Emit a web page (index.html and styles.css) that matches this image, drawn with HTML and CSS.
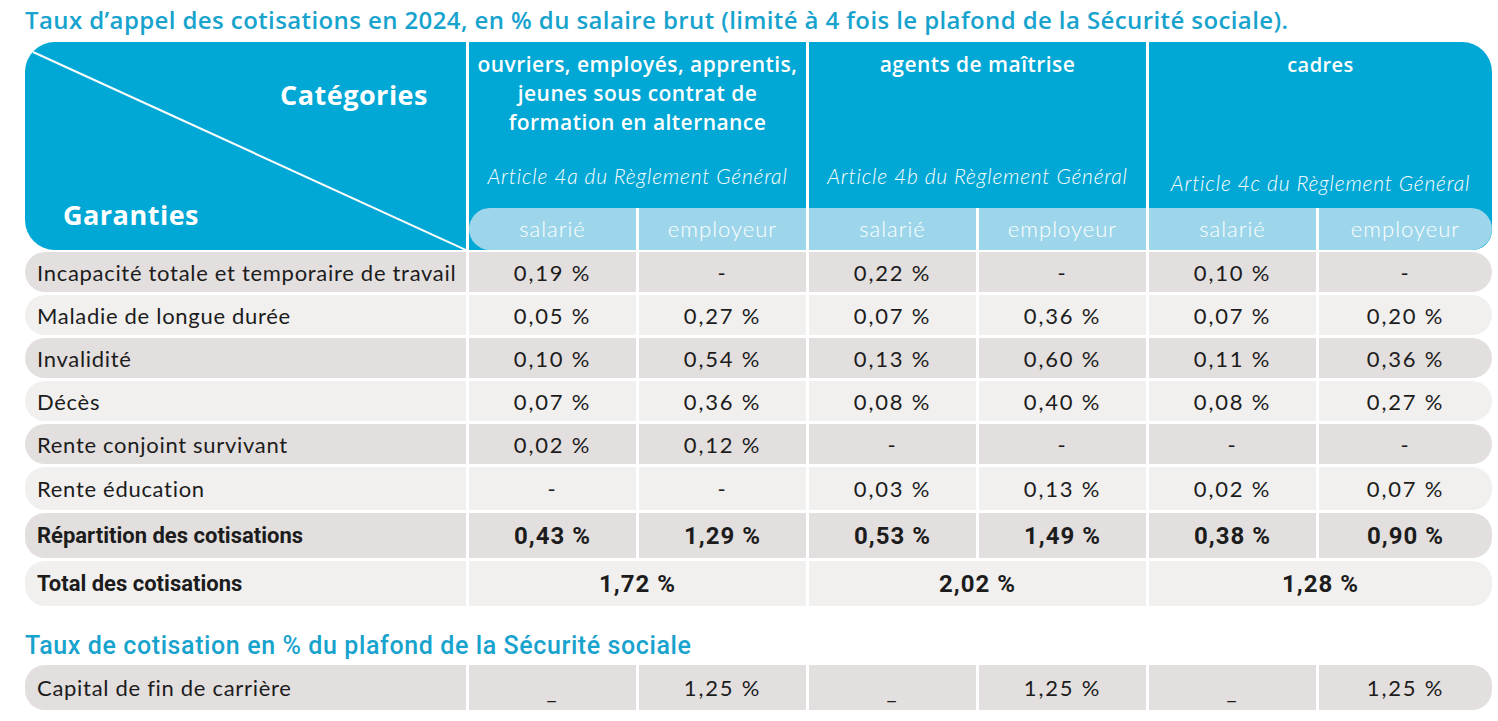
FILE: index.html
```html
<!DOCTYPE html>
<html lang="fr">
<head>
<meta charset="utf-8">
<title>Taux d'appel des cotisations 2024</title>
<link rel="stylesheet" href="styles.css">
</head>
<body>
<div class="page">
  <h1 class="title">Taux d’appel des cotisations en 2024, en % du salaire brut (limité à 4 fois le plafond de la Sécurité sociale).</h1>

  <div class="head">
    <div class="corner">
      <svg class="diag" viewBox="0 0 441 208" preserveAspectRatio="none" aria-hidden="true">
        <line x1="8" y1="10" x2="441" y2="208" stroke="#ffffff" stroke-width="2"/>
      </svg>
      <span class="cat">Catégories</span>
      <span class="gar">Garanties</span>
    </div>
    <div class="group">
      <div class="gtitle">ouvriers, employés, apprentis,<br>jeunes sous contrat de<br>formation en alternance</div>
      <div class="gart">Article 4a du Règlement Général</div>
      <div class="pills"><span class="pill first">salarié</span><span class="pill second">employeur</span></div>
    </div>
    <div class="group">
      <div class="gtitle">agents de maîtrise</div>
      <div class="gart">Article 4b du Règlement Général</div>
      <div class="pills"><span class="pill">salarié</span><span class="pill second">employeur</span></div>
    </div>
    <div class="group last">
      <div class="gtitle small">cadres</div>
      <div class="gart low">Article 4c du Règlement Général</div>
      <div class="pills"><span class="pill">salarié</span><span class="pill second end">employeur</span></div>
    </div>
  </div>

  <div class="row dark">
    <div class="lab">Incapacité totale et temporaire de travail</div>
    <div class="val">0,19 %</div><div class="val">-</div>
    <div class="val">0,22 %</div><div class="val">-</div>
    <div class="val">0,10 %</div><div class="val end">-</div>
  </div>
  <div class="row light">
    <div class="lab">Maladie de longue durée</div>
    <div class="val">0,05 %</div><div class="val">0,27 %</div>
    <div class="val">0,07 %</div><div class="val">0,36 %</div>
    <div class="val">0,07 %</div><div class="val end">0,20 %</div>
  </div>
  <div class="row dark">
    <div class="lab">Invalidité</div>
    <div class="val">0,10 %</div><div class="val">0,54 %</div>
    <div class="val">0,13 %</div><div class="val">0,60 %</div>
    <div class="val">0,11 %</div><div class="val end">0,36 %</div>
  </div>
  <div class="row light">
    <div class="lab">Décès</div>
    <div class="val">0,07 %</div><div class="val">0,36 %</div>
    <div class="val">0,08 %</div><div class="val">0,40 %</div>
    <div class="val">0,08 %</div><div class="val end">0,27 %</div>
  </div>
  <div class="row dark">
    <div class="lab">Rente conjoint survivant</div>
    <div class="val">0,02 %</div><div class="val">0,12 %</div>
    <div class="val">-</div><div class="val">-</div>
    <div class="val">-</div><div class="val end">-</div>
  </div>
  <div class="row light tall">
    <div class="lab">Rente éducation</div>
    <div class="val">-</div><div class="val">-</div>
    <div class="val">0,03 %</div><div class="val">0,13 %</div>
    <div class="val">0,02 %</div><div class="val end">0,07 %</div>
  </div>
  <div class="row dark taller bold">
    <div class="lab">Répartition des cotisations</div>
    <div class="val">0,43 %</div><div class="val">1,29 %</div>
    <div class="val">0,53 %</div><div class="val">1,49 %</div>
    <div class="val">0,38 %</div><div class="val end">0,90 %</div>
  </div>
  <div class="row light taller bold">
    <div class="lab">Total des cotisations</div>
    <div class="val span2">1,72 %</div>
    <div class="val span2">2,02 %</div>
    <div class="val span2 end">1,28 %</div>
  </div>

  <h2 class="subtitle">Taux de cotisation en % du plafond de la Sécurité sociale</h2>

  <div class="row dark taller">
    <div class="lab">Capital de fin de carrière</div>
    <div class="val under">_</div><div class="val">1,25 %</div>
    <div class="val under">_</div><div class="val">1,25 %</div>
    <div class="val under">_</div><div class="val end">1,25 %</div>
  </div>
</div>
</body>
</html>
```

FILE: styles.css
```css
* { box-sizing: border-box; }

html, body {
  margin: 0;
  padding: 0;
  background: #ffffff;
}

body {
  font-family: "Lato", "Noto Sans", sans-serif;
  color: #1c1c1c;
}

.page {
  padding: 0 0 0 25px;
  width: 1498px;
}

.title {
  margin: 5px 0 7px 0;
  height: 30px;
  font-family: "Open Sans", "Lato", sans-serif;
  font-size: 24px;
  line-height: 30px;
  font-weight: 600;
  letter-spacing: 0.4px;
  color: #17a3cd;
  white-space: nowrap;
}

/* ---------- header ---------- */
.head {
  display: flex;
  gap: 3px;
  height: 208px;
}

.corner {
  position: relative;
  width: 441px;
  flex: none;
  background: #01a8d5;
  border-radius: 30px 0 0 30px;
  display: flex;
  flex-direction: column;
  justify-content: space-between;
  padding: 35px 38px 17px 38px;
  color: #ffffff;
  font-family: "Open Sans", "Lato", sans-serif;
  font-weight: 700;
  font-size: 27px;
  letter-spacing: 0.5px;
  line-height: 36px;
}

.diag {
  position: absolute;
  left: 0;
  top: 0;
  width: 441px;
  height: 208px;
}

.cat { align-self: flex-end; position: relative; }
.gar { align-self: flex-start; position: relative; }

.group {
  width: 337px;
  flex: none;
  background: #01a8d5;
  display: flex;
  flex-direction: column;
  color: #ffffff;
}

.group.last {
  width: 343px;
  border-radius: 0 30px 20px 0;
}

.gtitle {
  padding-top: 8px;
  font-family: "Open Sans", "Lato", sans-serif;
  font-size: 21px;
  line-height: 29px;
  font-weight: 600;
  letter-spacing: 0.45px;
  text-align: center;
}

.gtitle.small { font-size: 20px; }

.gart {
  margin-top: auto;
  margin-bottom: 19px;
  font-size: 21px;
  line-height: 26px;
  font-style: italic;
  font-weight: 300;
  letter-spacing: 0.8px;
  text-align: center;
}

.gart.low { margin-bottom: 12px; }

.pills {
  display: flex;
  height: 42px;
}

.pill {
  width: 167px;
  flex: none;
  background: #9dd6ea;
  color: #ffffff;
  font-size: 22px;
  font-weight: 300;
  letter-spacing: 1px;
  line-height: 42px;
  text-align: center;
}

.pill.first { border-radius: 21px 0 0 21px; }

.pill.second {
  flex: 1;
  border-left: 3px solid #ffffff;
}

.pill.end { border-radius: 0 21px 21px 0; }

/* ---------- body rows ---------- */
.row {
  display: grid;
  grid-template-columns: 441px repeat(5, 167px) 173px;
  column-gap: 3px;
  height: 40px;
  margin-top: 3px;
  font-size: 22px;
}

.head + .row { margin-top: 2px; }

.row.tall { height: 43px; }
.row.taller { height: 45px; }

.row > div {
  display: flex;
  align-items: center;
  justify-content: center;
}

.row.dark > div { background: #e3dfde; }
.row.light > div { background: #f1f0ef; }

.row .lab {
  justify-content: flex-start;
  padding-left: 12px;
  border-radius: 20px 0 0 20px;
  white-space: nowrap;
  letter-spacing: 0.7px;
}

.row .val {
  letter-spacing: 1.8px;
  white-space: nowrap;
}

.row .end { border-radius: 0 20px 20px 0; }

.row .span2 { grid-column: span 2; }

.row.bold {
  font-family: "Roboto", "Lato", sans-serif;
  font-weight: 700;
}

.row.bold .lab {
  font-size: 22px;
  letter-spacing: 0;
}

.row.bold .val {
  font-size: 24px;
  letter-spacing: 1px;
}

.row .under { padding-top: 6px; }

/* ---------- subtitle ---------- */
.subtitle {
  margin: 25px 0 4px 0;
  height: 30px;
  font-family: "Roboto", "Lato", sans-serif;
  font-size: 25px;
  line-height: 30px;
  font-weight: 500;
  letter-spacing: 0.6px;
  color: #17a3cd;
}
```
